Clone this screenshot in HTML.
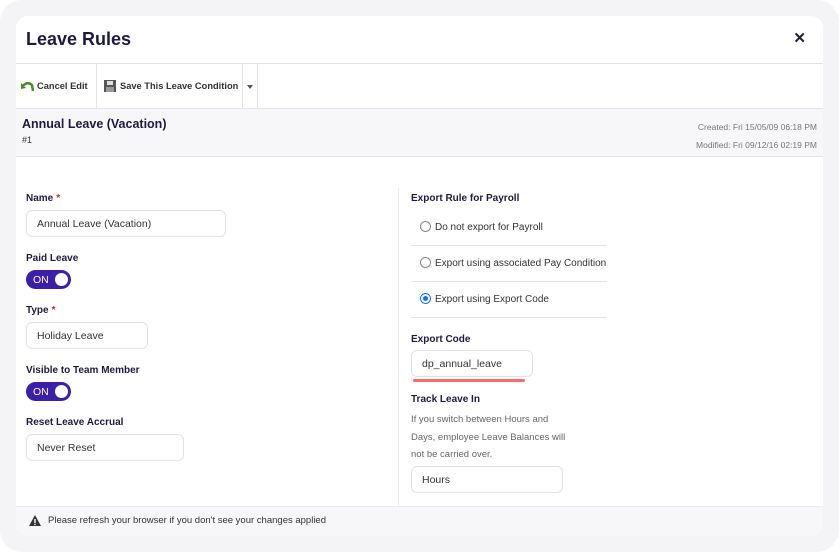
<!DOCTYPE html>
<html><head><style>
*{box-sizing:border-box;margin:0;padding:0}
body{width:839px;height:552px;background:#fff;font-family:"Liberation Sans",sans-serif;color:#1f1b3a;position:relative;overflow:hidden}
.outer{position:absolute;left:0;top:0;width:839px;height:552px;background:#f4f4f7;border-radius:22px}
.card{position:absolute;left:16px;top:16px;width:807px;height:520px;background:#fff;border-radius:12px;overflow:hidden}
.abs{position:absolute}
.title{left:10px;top:13px;font-size:18px;font-weight:bold;color:#1e1a40}
.x{right:17px;top:13px;font-size:15px;font-weight:bold}
.tb{left:0;top:47px;width:807px;height:46px;border-top:1px solid #e4e4e8;border-bottom:1px solid #e4e4e8}
.tbtxt{font-size:9.3px;font-weight:bold;color:#333;top:17px}
.sub{left:0;top:93px;width:807px;height:48px;background:#f7f7f9;border-bottom:1px solid #e4e4e8}
.lbl{font-size:10px;font-weight:bold;color:#1e1a40}
.req{color:#c0262d;margin-left:3px}
.inp{border:1px solid #e2e2e6;border-radius:6px;height:27px;font-size:10.5px;color:#333;padding:7px 10px}
.tog{width:45px;height:19px;border-radius:10px;background:#3b1fa8;color:#fff;font-size:10.5px;padding:4px 0 0 7px}
.tog:after{content:"";position:absolute;right:3px;top:3px;width:13px;height:13px;border-radius:50%;background:#fff}
.radio{font-size:10px;color:#333}
.rc{display:inline-block;width:11px;height:11px;border:1px solid #888;border-radius:50%;vertical-align:-2px;margin-right:4px;position:relative}
.sep{height:1px;background:#e4e4e8;width:196px}
.foot{left:0;top:490px;width:807px;height:30px;background:#f7f7f9;border-top:1px solid #ececef}
</style></head><body>
<div class="outer"></div>
<div class="card">
<div class="abs title">Leave Rules</div>
<div class="abs x">✕</div>
<div class="abs tb">
  <div class="abs" style="left:80px;top:0;width:1px;height:44px;background:#e4e4e8"></div>
  <div class="abs" style="left:226px;top:0;width:1px;height:44px;background:#e4e4e8"></div>
  <div class="abs" style="left:241px;top:0;width:1px;height:44px;background:#e4e4e8"></div>
  <svg class="abs" style="left:5px;top:17px" width="13" height="11" viewBox="0 0 13 11"><path d="M2 5 Q6 0 11 4 L12 10" stroke="#4a8a2a" stroke-width="2.5" fill="none"/><path d="M0 2 L5 7 L0 8Z" fill="#4a8a2a"/></svg>
  <div class="abs tbtxt" style="left:21px">Cancel Edit</div>
  <svg class="abs" style="left:88px;top:16px" width="12" height="12"><rect width="12" height="12" fill="#555"/><rect x="3" y="1" width="6" height="4" fill="#ddd"/><rect x="2" y="7" width="8" height="5" fill="#999"/></svg>
  <div class="abs tbtxt" style="left:104px">Save This Leave Condition</div>
  <div class="abs" style="left:231px;top:21px;border:3px solid transparent;border-top:4px solid #555"></div>
</div>
<div class="abs sub">
  <div class="abs" style="left:6px;top:8px;font-size:12.5px;font-weight:bold;color:#1e1a40">Annual Leave (Vacation)</div>
  <div class="abs" style="left:6px;top:26px;font-size:9px;color:#333">#1</div>
  <div class="abs" style="right:6px;top:13px;font-size:8.5px;color:#777">Created: Fri 15/05/09 06:18 PM</div>
  <div class="abs" style="right:6px;top:31px;font-size:8.5px;color:#777">Modified: Fri 09/12/16 02:19 PM</div>
</div>
<div class="abs" style="left:382px;top:172px;width:1px;height:318px;background:#ececef"></div>
<div class="abs lbl" style="left:10px;top:177px">Name<span class="req">*</span></div>
<div class="abs inp" style="left:10px;top:194px;width:200px">Annual Leave (Vacation)</div>
<div class="abs lbl" style="left:10px;top:237px">Paid Leave</div>
<div class="abs tog" style="left:10px;top:254px">ON</div>
<div class="abs lbl" style="left:10px;top:289px">Type<span class="req">*</span></div>
<div class="abs inp" style="left:10px;top:306px;width:122px">Holiday Leave</div>
<div class="abs lbl" style="left:10px;top:349px">Visible to Team Member</div>
<div class="abs tog" style="left:10px;top:366px">ON</div>
<div class="abs lbl" style="left:10px;top:401px">Reset Leave Accrual</div>
<div class="abs inp" style="left:10px;top:418px;width:158px">Never Reset</div>

<div class="abs lbl" style="left:395px;top:177px">Export Rule for Payroll</div>
<div class="abs radio" style="left:404px;top:205px"><span class="rc"></span>Do not export for Payroll</div>
<div class="abs sep" style="left:395px;top:229px"></div>
<div class="abs radio" style="left:404px;top:241px"><span class="rc"></span>Export using associated Pay Condition</div>
<div class="abs sep" style="left:395px;top:265px"></div>
<div class="abs radio" style="left:404px;top:277px"><span class="rc" style="border-color:#1a73e8"><span style="position:absolute;left:2px;top:2px;width:5px;height:5px;border-radius:50%;background:#1a73e8"></span></span>Export using Export Code</div>
<div class="abs sep" style="left:395px;top:301px"></div>
<div class="abs lbl" style="left:395px;top:318px">Export Code</div>
<div class="abs inp" style="left:395px;top:334px;width:122px">dp_annual_leave</div>
<div class="abs" style="left:397px;top:363px;width:112px;height:3px;background:#ff6b6b;border-radius:2px"></div>
<div class="abs lbl" style="left:395px;top:378px">Track Leave In</div>
<div class="abs" style="left:395px;top:395px;font-size:9.5px;color:#666;line-height:17.5px;width:162px">If you switch between Hours and Days, employee Leave Balances will not be carried over.</div>
<div class="abs inp" style="left:395px;top:450px;width:152px">Hours</div>

<div class="abs foot">
  <svg class="abs" style="left:13px;top:8px" width="12" height="11"><path d="M6 0 L12 11 L0 11Z" fill="#333"/><rect x="5.3" y="4" width="1.4" height="4" fill="#fff"/><rect x="5.3" y="8.8" width="1.4" height="1.3" fill="#fff"/></svg>
  <div class="abs" style="left:32px;top:8px;font-size:9.5px;color:#333">Please refresh your browser if you don't see your changes applied</div>
</div>
</div>
</body></html>
